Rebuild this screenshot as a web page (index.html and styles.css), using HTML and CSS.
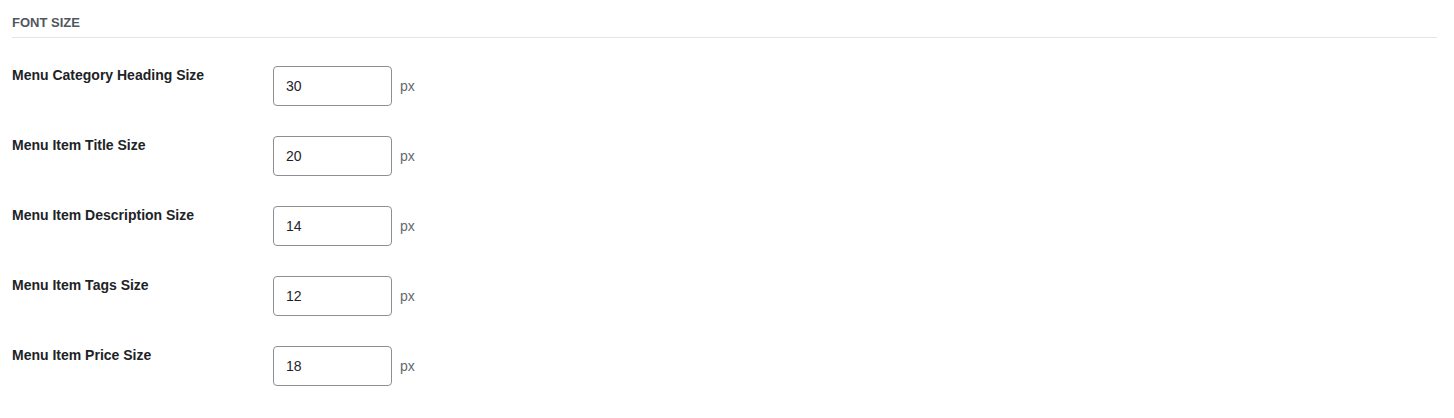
FILE: index.html
```html
<!DOCTYPE html>
<html>

	<head>
		<meta charset="utf-8" />
		<title>Font Size</title>
		<link rel="stylesheet" href="styles.css">
	</head>

	<body>
		<div class="panel">
			<h3 class="section-title">Font Size</h3>
			<div class="rows">
				<div class="row">
					<label class="row-label" for="cat-heading">Menu Category Heading Size</label>
					<div class="row-field">
						<input type="text" id="cat-heading" class="size-input" value="30" />
						<span class="unit">px</span>
					</div>
				</div>
				<div class="row">
					<label class="row-label" for="item-title">Menu Item Title Size</label>
					<div class="row-field">
						<input type="text" id="item-title" class="size-input" value="20" />
						<span class="unit">px</span>
					</div>
				</div>
				<div class="row">
					<label class="row-label" for="item-desc">Menu Item Description Size</label>
					<div class="row-field">
						<input type="text" id="item-desc" class="size-input" value="14" />
						<span class="unit">px</span>
					</div>
				</div>
				<div class="row">
					<label class="row-label" for="item-tags">Menu Item Tags Size</label>
					<div class="row-field">
						<input type="text" id="item-tags" class="size-input" value="12" />
						<span class="unit">px</span>
					</div>
				</div>
				<div class="row">
					<label class="row-label" for="item-price">Menu Item Price Size</label>
					<div class="row-field">
						<input type="text" id="item-price" class="size-input" value="18" />
						<span class="unit">px</span>
					</div>
				</div>
			</div>
		</div>
	</body>

</html>
```

FILE: styles.css
```css
* {
	margin: 0;
	padding: 0;
	box-sizing: border-box;
}

body {
	background: #fff;
	font-family: "Liberation Sans", Arial, sans-serif;
	font-size: 13px;
	color: #1d2327;
}

.panel {
	padding: 0 17px 0 12px;
}

.section-title {
	padding: 14px 0 5px;
	line-height: 18px;
	font-size: 13px;
	font-weight: 600;
	text-transform: uppercase;
	color: #50575e;
	border-bottom: 1px solid #e5e5e5;
}

.rows {
	padding-top: 28px;
}

.row {
	display: flex;
	align-items: flex-start;
	height: 70px;
}

.row-label {
	width: 261px;
	flex-shrink: 0;
	font-size: 14px;
	font-weight: bold;
	line-height: 14px;
	padding-top: 2px;
	color: #1d2327;
}

.row-field {
	display: flex;
	align-items: center;
	gap: 8px;
}

.size-input {
	width: 119px;
	height: 40px;
	padding: 0 12px;
	border: 1px solid #8c8f94;
	border-radius: 4px;
	font-family: "Liberation Sans", Arial, sans-serif;
	font-size: 14px;
	color: #1d2327;
	background: #fff;
	outline: none;
}

.unit {
	font-size: 14px;
	color: #646970;
}
```
